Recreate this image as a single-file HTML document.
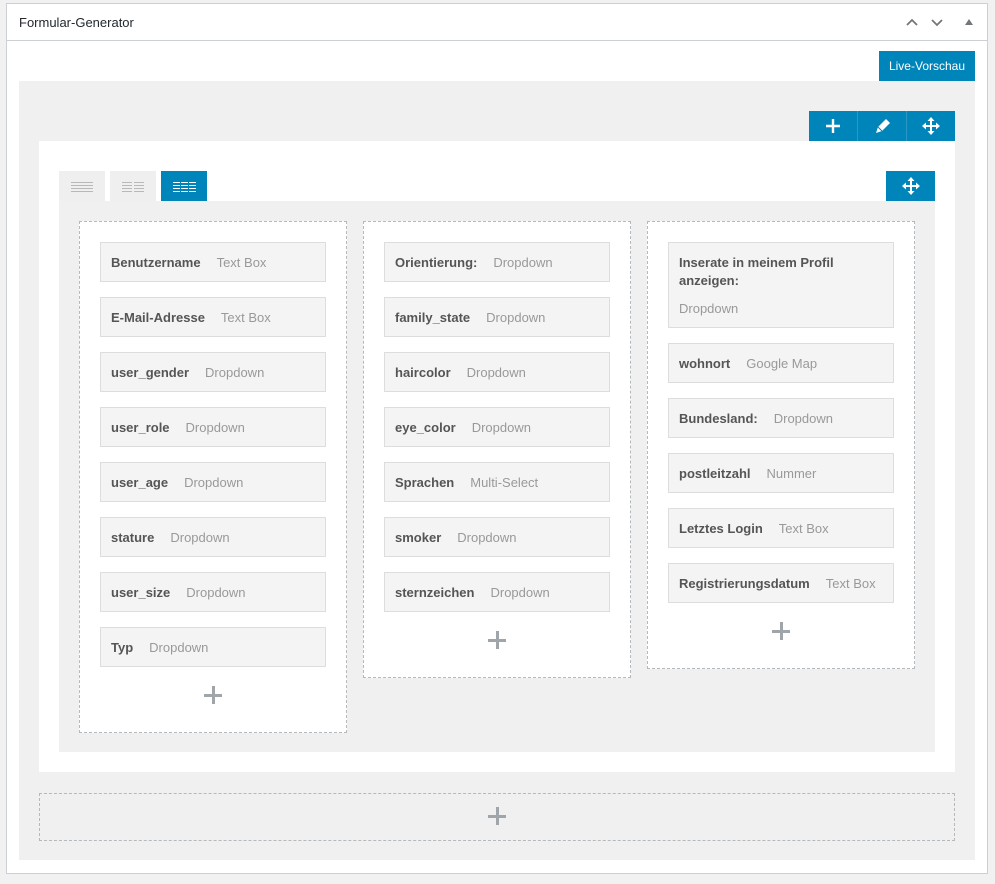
<!DOCTYPE html>
<html><head><meta charset="utf-8"><style>
*{box-sizing:border-box;margin:0;padding:0}
body{width:995px;height:884px;background:#f1f1f1;font-family:"Liberation Sans",sans-serif;position:relative;overflow:hidden}
.a{position:absolute}
.box{left:6px;top:3px;width:982px;height:871px;background:#fff;border:1px solid #ccd0d4}
.hdr{left:6px;top:3px;width:982px;height:38px;border-bottom:1px solid #ccd0d4}
.title{left:19px;top:15px;font-size:13px;color:#23282d}
.btn{background:#0085ba;color:#fff}
.fld{position:absolute;left:20px;width:226px;height:40px;background:#f4f4f4;border:1px solid #ddd;font-size:13px;padding:12px 10px;white-space:nowrap}
.fld b{color:#555;margin-right:16px}
.fld span{color:#999}
.col{position:absolute;width:268px;background:#fff;border:1px dashed #b4b9be}
.plus{position:absolute;width:18px;height:18px}
.plus:before{content:"";position:absolute;left:0;top:7.5px;width:18px;height:3px;background:#a0a5aa}
.plus:after{content:"";position:absolute;left:7.5px;top:0;width:3px;height:18px;background:#a0a5aa}
.tab{top:171px;width:46px;height:30px;background:#efefef}
.ln{position:absolute;height:1px;background:#b8b8b8}
</style></head><body>
<div class="a box"></div>
<div class="a hdr"></div>
<div class="a title">Formular-Generator</div>
<svg class="a" style="left:904px;top:15px" width="70" height="14"><path d="M3 10 L8 5 L13 10" stroke="#72777c" stroke-width="1.8" fill="none"/><path d="M28 5 L33 10 L38 5" stroke="#72777c" stroke-width="1.8" fill="none"/><path d="M61 10 L65 4 L69 10Z" fill="#72777c"/></svg>
<div class="a btn" style="left:879px;top:51px;width:96px;height:30px;font-size:12px;line-height:30px;text-align:center">Live-Vorschau</div>
<div class="a" style="left:19px;top:81px;width:956px;height:779px;background:#f0f0f0"></div>
<div class="a btn" style="left:809px;top:111px;width:146px;height:30px"></div>
<div class="a" style="left:857px;top:111px;width:1px;height:30px;background:#2a98c4"></div>
<div class="a" style="left:906px;top:111px;width:1px;height:30px;background:#2a98c4"></div>
<svg class="a" style="left:809px;top:111px" width="146" height="30">
<path d="M24 8v14M17 15h14" stroke="#fff" stroke-width="2.4"/>
<path d="M67 22l2-6 8-8 4 4-8 8z" fill="#fff"/><path d="M69 16l4 4" stroke="#0085ba" stroke-width="1"/>
<g transform="translate(122,15)" fill="#fff"><path d="M-1 -6h2v12h-2zM-6 -1h12v2h-12z"/><path d="M0 -9l-3.5 4h7zM0 9l-3.5-4h7zM-9 0l4-3.5v7zM9 0l-4-3.5v7z"/></g>
</svg>
<div class="a" style="left:39px;top:141px;width:916px;height:631px;background:#fff"></div>
<div class="a tab" style="left:59px"><div class="ln" style="left:12px;top:11px;width:22px"></div><div class="ln" style="left:12px;top:14px;width:22px"></div><div class="ln" style="left:12px;top:17px;width:22px"></div><div class="ln" style="left:12px;top:20px;width:22px"></div></div>
<div class="a tab" style="left:110px"><div class="ln" style="left:12px;top:11px;width:10px"></div><div class="ln" style="left:12px;top:14px;width:10px"></div><div class="ln" style="left:12px;top:17px;width:10px"></div><div class="ln" style="left:12px;top:20px;width:10px"></div><div class="ln" style="left:24px;top:11px;width:10px"></div><div class="ln" style="left:24px;top:14px;width:10px"></div><div class="ln" style="left:24px;top:17px;width:10px"></div><div class="ln" style="left:24px;top:20px;width:10px"></div></div>
<div class="a tab" style="left:161px;background:#0085ba"><div class="ln" style="background:#fff;left:12px;top:11px;width:7px"></div><div class="ln" style="background:#fff;left:12px;top:14px;width:7px"></div><div class="ln" style="background:#fff;left:12px;top:17px;width:7px"></div><div class="ln" style="background:#fff;left:12px;top:20px;width:7px"></div><div class="ln" style="background:#fff;left:20px;top:11px;width:7px"></div><div class="ln" style="background:#fff;left:20px;top:14px;width:7px"></div><div class="ln" style="background:#fff;left:20px;top:17px;width:7px"></div><div class="ln" style="background:#fff;left:20px;top:20px;width:7px"></div><div class="ln" style="background:#fff;left:28px;top:11px;width:7px"></div><div class="ln" style="background:#fff;left:28px;top:14px;width:7px"></div><div class="ln" style="background:#fff;left:28px;top:17px;width:7px"></div><div class="ln" style="background:#fff;left:28px;top:20px;width:7px"></div></div>
<svg class="a btn" style="left:886px;top:171px" width="49" height="30"><g transform="translate(25,15)" fill="#fff"><path d="M-1 -6h2v12h-2zM-6 -1h12v2h-12z"/><path d="M0 -9l-3.5 4h7zM0 9l-3.5-4h7zM-9 0l4-3.5v7zM9 0l-4-3.5v7z"/></g></svg>
<div class="a" style="left:59px;top:201px;width:876px;height:551px;background:#f0f0f0"></div>

<div class="col" style="left:79px;top:221px;height:512px">
<div class="fld" style="top:20px"><b>Benutzername</b><span>Text Box</span></div>
<div class="fld" style="top:75px"><b>E-Mail-Adresse</b><span>Text Box</span></div>
<div class="fld" style="top:130px"><b>user_gender</b><span>Dropdown</span></div>
<div class="fld" style="top:185px"><b>user_role</b><span>Dropdown</span></div>
<div class="fld" style="top:240px"><b>user_age</b><span>Dropdown</span></div>
<div class="fld" style="top:295px"><b>stature</b><span>Dropdown</span></div>
<div class="fld" style="top:350px"><b>user_size</b><span>Dropdown</span></div>
<div class="fld" style="top:405px"><b>Typ</b><span>Dropdown</span></div>
<div class="plus" style="left:124px;top:464px"></div>
</div>
<div class="col" style="left:363px;top:221px;height:457px">
<div class="fld" style="top:20px"><b>Orientierung:</b><span>Dropdown</span></div>
<div class="fld" style="top:75px"><b>family_state</b><span>Dropdown</span></div>
<div class="fld" style="top:130px"><b>haircolor</b><span>Dropdown</span></div>
<div class="fld" style="top:185px"><b>eye_color</b><span>Dropdown</span></div>
<div class="fld" style="top:240px"><b>Sprachen</b><span>Multi-Select</span></div>
<div class="fld" style="top:295px"><b>smoker</b><span>Dropdown</span></div>
<div class="fld" style="top:350px"><b>sternzeichen</b><span>Dropdown</span></div>
<div class="plus" style="left:124px;top:409px"></div>
</div>
<div class="col" style="left:647px;top:221px;height:448px">
<div class="fld" style="top:20px;height:86px;line-height:18px;padding-top:11px"><b>Inserate in meinem Profil<br>anzeigen:</b><br><span style="display:block;margin-top:10px">Dropdown</span></div>
<div class="fld" style="top:121px"><b>wohnort</b><span>Google Map</span></div>
<div class="fld" style="top:176px"><b>Bundesland:</b><span>Dropdown</span></div>
<div class="fld" style="top:231px"><b>postleitzahl</b><span>Nummer</span></div>
<div class="fld" style="top:286px"><b>Letztes Login</b><span>Text Box</span></div>
<div class="fld" style="top:341px"><b>Registrierungsdatum</b><span>Text Box</span></div>
<div class="plus" style="left:124px;top:400px"></div>
</div>

<div class="a" style="left:39px;top:793px;width:916px;height:48px;border:1px dashed #b4b9be"></div>
<div class="plus" style="left:488px;top:807px;"></div>
</body></html>
